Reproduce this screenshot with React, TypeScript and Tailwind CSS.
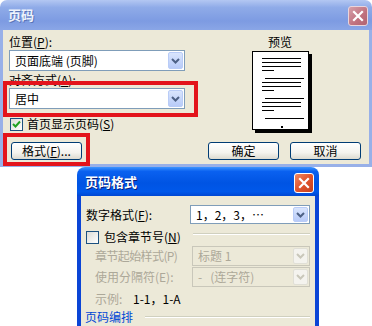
const FONT = "font-['SimSun','Noto_Sans_CJK_SC',sans-serif]"

function Chevron({ disabled }: { disabled?: boolean }) {
  return (
    <svg width="9" height="6" viewBox="0 0 9 6">
      <path
        d="M1 1 L4.5 4.5 L8 1"
        fill="none"
        stroke={disabled ? '#c9c7ba' : '#4d6185'}
        strokeWidth="2"
      />
    </svg>
  )
}

function Combo({
  value,
  width,
  height,
  disabled,
}: {
  value: string
  width: string
  height: string
  disabled?: boolean
}) {
  return (
    <div
      className={`flex shrink-0 items-center border ${width} ${height} ${
        disabled ? 'border-[#c9c7ba] bg-[#ece9d8] text-[#aca899]' : 'border-[#7f9db9] bg-white text-black'
      }`}
    >
      <span className="flex-1 whitespace-pre pl-[5px] text-[12px] leading-[14px]">{value}</span>
      <div
        className={`mr-px flex h-[calc(100%-2px)] w-[15px] items-center justify-center rounded-[2px] border ${
          disabled
            ? 'border-[#e0dfd6] bg-[#f4f3ee]'
            : 'border-[#b9ccf7] bg-[linear-gradient(to_bottom,#d9e5fd,#b8cbf8)]'
        }`}
      >
        <Chevron disabled={disabled} />
      </div>
    </div>
  )
}

function XpButton({ children, className = '' }: { children: React.ReactNode; className?: string }) {
  return (
    <div
      className={`flex h-[18px] w-[71px] items-center justify-center rounded-[3px] border border-[#003c74] bg-[linear-gradient(to_bottom,#ffffff,#f4f3ee_60%,#dcdad0)] text-[12px] leading-[14px] text-black ${className}`}
    >
      {children}
    </div>
  )
}

function CloseBox({ active }: { active?: boolean }) {
  return (
    <div
      className={`flex h-[20px] w-[20px] items-center justify-center rounded-[3px] border ${
        active
          ? 'border-white bg-[linear-gradient(135deg,#f08a64,#e0532c_50%,#c5401e)]'
          : 'border-[#e9d5dc] bg-[linear-gradient(135deg,#d5a0aa,#c0717e_60%,#b16370)]'
      }`}
    >
      <svg width="12" height="12" viewBox="0 0 12 12">
        <path d="M2 2 L10 10 M10 2 L2 10" stroke="white" strokeWidth="2.2" strokeLinecap="square" />
      </svg>
    </div>
  )
}

function Line({ short, indent }: { short?: boolean; indent?: boolean }) {
  return <div className={`h-px bg-black ${short ? 'w-[12px]' : 'w-full'} ${indent ? 'ml-[3px] w-[calc(100%-3px)]' : ''}`} />
}

function Groove({ className = '' }: { className?: string }) {
  return <div className={`h-[2px] border-t border-b border-t-[#d0d0bf] border-b-white ${className}`} />
}

export default function App() {
  return (
    <div className={`relative h-[326px] w-[372px] overflow-hidden bg-white ${FONT}`}>
      {/* 页码 dialog (inactive) */}
      <div className="flex h-[167px] w-[372px] flex-col">
        <div className="flex h-[30px] items-center rounded-t-[7px] bg-[linear-gradient(to_bottom,#b3c7f2,#8fabe8_25%,#7d9be2_70%,#8aa6e6)] pl-[8px] pr-[4px]">
          <span className="text-[13px] font-bold leading-[14px] text-[#eef3fc] [text-shadow:1px_1px_0_#5a76b8]">
            页码
          </span>
          <div className="ml-auto mt-[2px]">
            <CloseBox />
          </div>
        </div>
        <div className="flex flex-1 flex-col border-x-[3px] border-b-[3px] border-[#98b0e8] bg-[#ece9d8] text-[12px] leading-[14px] text-black">
          <div className="flex pl-[6px] pt-[5px]">
            <div className="flex w-[176px] flex-col">
              <span className="h-[14px]">
                位置(<u>P</u>):
              </span>
              <div className="mt-px">
                <Combo value="页面底端 (页脚)" width="w-[176px]" height="h-[21px]" />
              </div>
              <span className="mt-[2px] h-[14px]">
                对齐方式(<u>A</u>):
              </span>
              <div className="mt-px">
                <Combo value="居中" width="w-[176px]" height="h-[21px]" />
              </div>
              <div className="mt-[8px] flex h-[14px] items-center gap-[4px] pl-px">
                <div className="flex h-[13px] w-[13px] items-center justify-center border border-[#1c5180] bg-[linear-gradient(135deg,#dcdcd7,#ffffff)]">
                  <svg width="9" height="9" viewBox="0 0 9 9">
                    <path d="M1 4 L3.5 6.5 L8 1.5" fill="none" stroke="#21a121" strokeWidth="2" />
                  </svg>
                </div>
                <span>
                  首页显示页码(<u>S</u>)
                </span>
              </div>
            </div>
            <div className="ml-[67px] flex w-[60px] flex-col items-center">
              <span className="h-[14px] pr-[4px]">预览</span>
              <div className="mt-[2px] flex h-[79px] w-[57px] flex-col self-start border border-black bg-white pl-[9px] pr-[7px] pt-[6px] shadow-[3px_3px_0_0_#000]">
                <div className="flex flex-col gap-[3px]">
                  <Line />
                  <Line />
                  <Line />
                  <Line short />
                </div>
                <div className="mt-[7px] flex flex-col gap-[3px]">
                  <Line indent />
                  <Line />
                  <Line />
                  <Line short />
                </div>
                <div className="mt-[7px] flex flex-col gap-[3px]">
                  <Line indent />
                  <Line />
                  <Line />
                  <Line short />
                </div>
                <div className="mt-[7px]">
                  <Line indent />
                </div>
                <div className="mt-[7px] h-[2px] w-[2px] self-center bg-black" />
              </div>
            </div>
          </div>
          <div className="mt-[11px] flex pl-[8px] pr-[8px]">
            <XpButton>
              格式(<u>F</u>)...
            </XpButton>
            <XpButton className="ml-auto">确定</XpButton>
            <XpButton className="ml-[11px]">取消</XpButton>
          </div>
        </div>
      </div>

      {/* 页码格式 dialog (active) */}
      <div className="ml-[77px] flex w-[242px] flex-col">
        <div className="flex h-[29px] items-center rounded-t-[8px] bg-[linear-gradient(to_bottom,#3d95ff,#0a61f0_15%,#0054e3_55%,#0058ea_85%,#0047d2)] pl-[8px] pr-[5px]">
          <span className="text-[13px] font-bold leading-[14px] text-white [text-shadow:1px_1px_0_#0a1f7a]">
            页码格式
          </span>
          <div className="ml-auto mt-[2px]">
            <CloseBox active />
          </div>
        </div>
        <div className="flex h-[130px] flex-col border-x-[4px] border-x-[#0b45d6] bg-[#ece9d8] pl-[5px] pr-[5px] pt-[9px] text-[12px] leading-[14px] text-black">
          <div className="flex items-center">
            <span className="w-[104px] shrink-0 whitespace-nowrap">
              数字格式(<u>F</u>):
            </span>
            <Combo value="1，2，3，…" width="w-[120px]" height="h-[19px]" />
          </div>
          <div className="mt-[6px] flex h-[14px] items-center">
            <div className="h-[13px] w-[13px] border border-[#1c5180] bg-[linear-gradient(135deg,#dcdcd7,#ffffff)]" />
            <span className="ml-[5px]">
              包含章节号(<u>N</u>)
            </span>
            <Groove className="ml-[12px] mb-[6px] flex-1" />
          </div>
          <div className="mt-[2px] flex items-center text-[#aca899]">
            <span className="w-[106px] shrink-0 whitespace-nowrap pl-[9px] tracking-[-0.6px]">章节起始样式(P)</span>
            <Combo value="标题 1" width="w-[118px]" height="h-[20px]" disabled />
          </div>
          <div className="mt-px flex items-center text-[#aca899]">
            <span className="w-[106px] shrink-0 whitespace-nowrap pl-[9px]">使用分隔符(E):</span>
            <Combo value="-   (连字符)" width="w-[118px]" height="h-[20px]" disabled />
          </div>
          <div className="mt-[5px] flex h-[14px] items-center pl-[9px]">
            <span className="w-[38px] text-[#aca899]">示例:</span>
            <span>1-1，1-A</span>
          </div>
          <div className="mt-[4px] flex h-[14px] items-center">
            <span className="-ml-px text-[#0046d5]">页码编排</span>
            <Groove className="ml-[12px] flex-1" />
          </div>
        </div>
      </div>

      {/* red annotation frames */}
      <div className="pointer-events-none absolute left-[3px] top-[81px] h-[36px] w-[195px] border-[4px] border-[#e3141c]" />
      <div className="pointer-events-none absolute left-[3px] top-[133px] h-[33px] w-[87px] border-[4px] border-[#e3141c]" />
    </div>
  )
}
